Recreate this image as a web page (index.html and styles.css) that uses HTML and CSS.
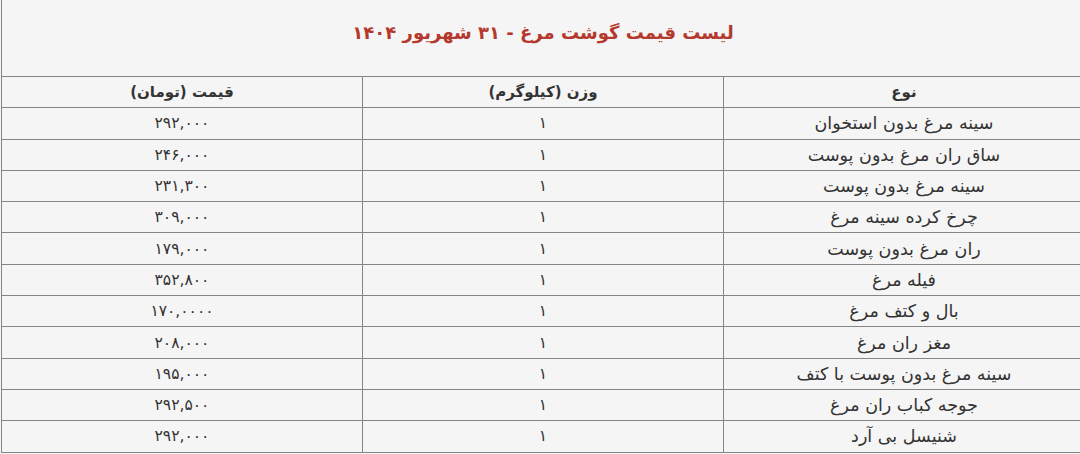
FILE: index.html
```html
<!DOCTYPE html>
<html lang="fa">
<head>
<meta charset="utf-8">
<link rel="stylesheet" href="styles.css">
</head>
<body>
<div class="wrap">
<table class="prices" dir="rtl">
  <tbody>
    <tr class="title-row"><td colspan="3" class="title">لیست قیمت گوشت مرغ - ۳۱ شهریور ۱۴۰۴</td></tr>
    <tr class="head"><th>نوع</th><th>وزن (کیلوگرم)</th><th>قیمت (تومان)</th></tr>
    <tr><td class="name">سینه مرغ بدون استخوان</td><td>۱</td><td>۲۹۲,۰۰۰</td></tr>
    <tr><td class="name">ساق ران مرغ بدون پوست</td><td>۱</td><td>۲۴۶,۰۰۰</td></tr>
    <tr><td class="name">سینه مرغ بدون پوست</td><td>۱</td><td>۲۳۱,۳۰۰</td></tr>
    <tr><td class="name">چرخ کرده سینه مرغ</td><td>۱</td><td>۳۰۹,۰۰۰</td></tr>
    <tr><td class="name">ران مرغ بدون پوست</td><td>۱</td><td>۱۷۹,۰۰۰</td></tr>
    <tr><td class="name">فیله مرغ</td><td>۱</td><td>۳۵۲,۸۰۰</td></tr>
    <tr><td class="name">بال و کتف مرغ</td><td>۱</td><td>۱۷۰,۰۰۰۰</td></tr>
    <tr><td class="name">مغز ران مرغ</td><td>۱</td><td>۲۰۸,۰۰۰</td></tr>
    <tr><td class="name">سینه مرغ بدون پوست با کتف</td><td>۱</td><td>۱۹۵,۰۰۰</td></tr>
    <tr><td class="name">جوجه کباب ران مرغ</td><td>۱</td><td>۲۹۲,۵۰۰</td></tr>
    <tr><td class="name">شنیسل بی آرد</td><td>۱</td><td>۲۹۲,۰۰۰</td></tr>
  </tbody>
</table>
</div>
</body>
</html>
```

FILE: styles.css
```css
html, body {
  margin: 0;
  padding: 0;
  background: #f5f5f5;
}
.wrap {
  width: 1080px;
  height: 454px;
  overflow: hidden;
  padding-left: 1px;
  box-sizing: border-box;
}
.prices {
  width: 1084px;
  border-collapse: collapse;
  table-layout: fixed;
  font-family: "DejaVu Sans", sans-serif;
  color: #333;
  font-size: 15.5px;
  margin-top: -1px;
}
.prices td, .prices th {
  border: 1px solid #858585;
  text-align: center;
  padding: 0;
  height: 30.3px;
  vertical-align: middle;
}
.prices th {
  font-weight: bold;
  font-size: 15px;
}
.prices td.name {
  font-size: 17.5px;
}
.title-row .title {
  height: 67px;
  padding-bottom: 10px;
  color: #b5382c;
  font-weight: bold;
  font-size: 18px;
  border-top: none;
}
```
